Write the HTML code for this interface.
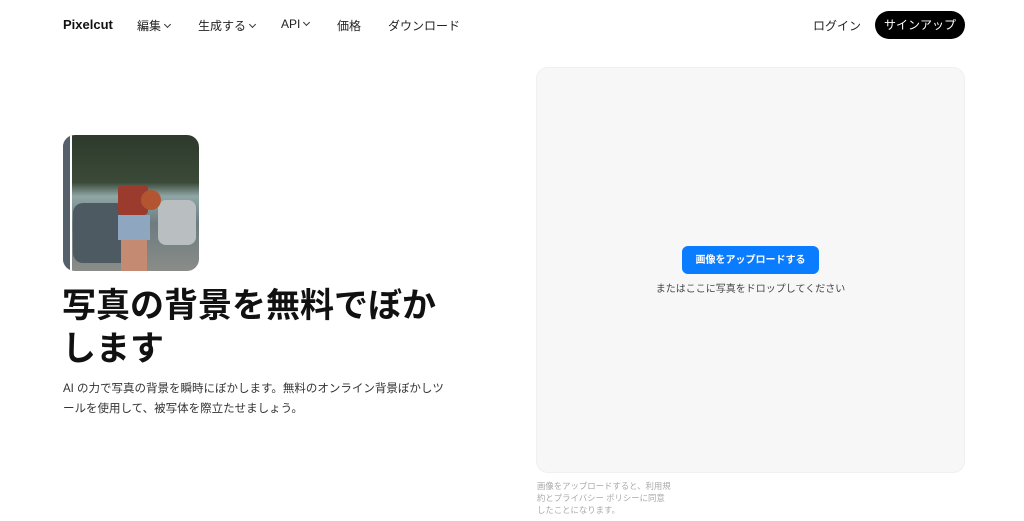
<!DOCTYPE html>
<html><head><meta charset="utf-8"><style>
*{margin:0;padding:0;box-sizing:border-box}
body{width:1024px;height:521px;background:#fff;font-family:"Liberation Sans","Noto Sans CJK JP",sans-serif;color:#111;position:relative;overflow:hidden}
.a{position:absolute;white-space:nowrap}
.nav{font-size:12px;top:17px;color:#222}
.ch{display:inline-block;width:5px;height:5px;border-right:1.3px solid #333;border-bottom:1.3px solid #333;transform:rotate(45deg);margin-left:4px;position:relative;top:-3px}
</style></head><body>
<div class="a" style="left:63px;top:17px;font-size:13px;font-weight:bold">Pixelcut</div>
<div class="a nav" style="left:137px">編集<span class="ch"></span></div>
<div class="a nav" style="left:198px">生成する<span class="ch"></span></div>
<div class="a nav" style="left:281px">API<span class="ch"></span></div>
<div class="a nav" style="left:337px">価格</div>
<div class="a nav" style="left:388px">ダウンロード</div>
<div class="a nav" style="left:813px">ログイン</div>
<div class="a" style="left:875px;top:11px;width:90px;height:28px;border-radius:14px;background:#000;color:#fff;font-size:12px;text-align:center;line-height:28px">サインアップ</div>

<div class="a" style="left:63px;top:135px;width:136px;height:136px;border-radius:12px;overflow:hidden;background:linear-gradient(180deg,#2d3a2c 0%,#3b4a38 35%,#8fa6a6 45%,#6d7c80 65%,#8a8c88 100%)">
  <div style="position:absolute;left:0;top:0;width:7px;height:136px;background:#55606a"></div>
  <div style="position:absolute;left:7px;top:0;width:2px;height:136px;background:#fff"></div>
  <div style="position:absolute;left:10px;top:68px;width:70px;height:60px;border-radius:10px;background:#4d5a62"></div>
  <div style="position:absolute;left:95px;top:65px;width:38px;height:45px;border-radius:8px;background:#b9bec0"></div>
  <div style="position:absolute;left:55px;top:50px;width:30px;height:30px;background:#9a3b2e;border-radius:4px"></div>
  <div style="position:absolute;left:55px;top:80px;width:32px;height:25px;background:#8fa6c0"></div>
  <div style="position:absolute;left:78px;top:55px;width:20px;height:20px;border-radius:50%;background:#b25530"></div>
  <div style="position:absolute;left:58px;top:105px;width:26px;height:31px;background:#c48a72"></div>
</div>

<div class="a" style="left:62px;top:285px;font-size:34px;font-weight:bold;line-height:43px;white-space:normal;width:420px">写真の背景を無料でぼか<br>します</div>
<div class="a" style="left:63px;top:379px;font-size:11.5px;line-height:20px;color:#333">AI の力で写真の背景を瞬時にぼかします。無料のオンライン背景ぼかしツ<br>ールを使用して、被写体を際立たせましょう。</div>

<div class="a" style="left:536px;top:67px;width:429px;height:406px;border-radius:12px;background:#f7f7f8;border:1px solid #f0f0f1"></div>
<div class="a" style="left:682px;top:246px;width:137px;height:28px;border-radius:6px;background:#0a7cff;color:#fff;font-size:10px;font-weight:bold;text-align:center;line-height:28px"><span style="position:relative;top:1px">画像をアップロードする</span></div>
<div class="a" style="left:536px;width:429px;text-align:center;top:280px;font-size:10px;color:#444">またはここに写真をドロップしてください</div>
<div class="a" style="left:537px;top:480px;font-size:8.4px;line-height:12px;color:#aaa">画像をアップロードすると、利用規<br>約とプライバシー ポリシーに同意<br>したことになります。</div>
</body></html>
